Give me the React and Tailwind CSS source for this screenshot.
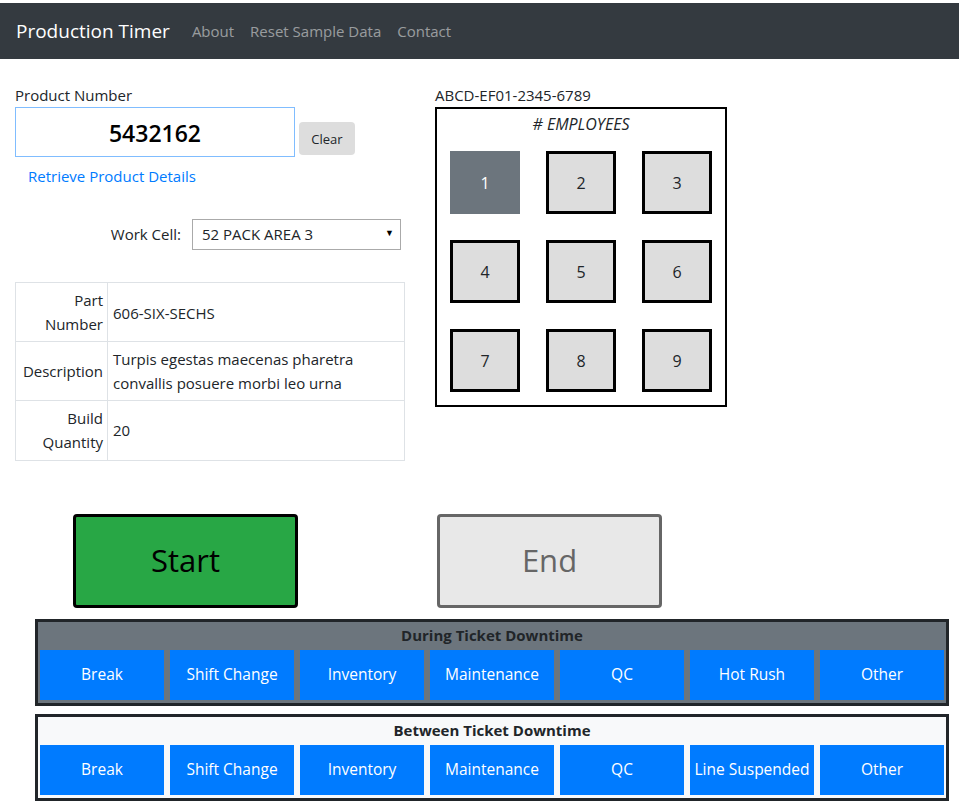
import { useState } from 'react'

const FONT = { fontFamily: '"Open Sans", "Noto Sans", sans-serif' }

const DURING = ['Break', 'Shift Change', 'Inventory', 'Maintenance', 'QC', 'Hot Rush', 'Other']
const BETWEEN = ['Break', 'Shift Change', 'Inventory', 'Maintenance', 'QC', 'Line Suspended', 'Other']

function DowntimePanel({ title, reasons, dark }) {
  return (
    <div
      className={`border-[3px] border-[#212529] px-[2px] pb-[3px] ${dark ? 'bg-[#6c757d]' : 'bg-[#f8f9fa]'}`}
    >
      <div className="flex h-[28px] items-center justify-center text-[15px] font-bold text-[#212529]">{title}</div>
      <div className="grid grid-cols-7 gap-[6px]">
        {reasons.map((reason) => (
          <button
            key={reason}
            type="button"
            className="h-[50px] bg-[#007bff] text-[15.5px] whitespace-nowrap text-white"
          >
            {reason}
          </button>
        ))}
      </div>
    </div>
  )
}

function EmployeePad() {
  const [selected, setSelected] = useState(1)

  return (
    <div className="w-[292px]">
      <div className="-mt-[2px] h-[23px] text-[15px] text-[#212529]">ABCD-EF01-2345-6789</div>
      <div className="h-[300px] border-2 border-black">
        <div className="pt-[3px] text-center text-[16px] italic text-[#212529]"># EMPLOYEES</div>
        <div className="mt-[15px] grid grid-cols-3 gap-x-[26px] gap-y-[26px] px-[13px]">
          {[1, 2, 3, 4, 5, 6, 7, 8, 9].map((n) => (
            <button
              key={n}
              type="button"
              onClick={() => setSelected(n)}
              className={`flex h-[63px] w-[70px] items-center justify-center text-[16px] ${
                selected === n ? 'bg-[#6c757d] text-white' : 'border-[3px] border-black bg-[#dddddd] text-[#212529]'
              }`}
            >
              {n}
            </button>
          ))}
        </div>
      </div>
    </div>
  )
}

export default function App() {
  const [product, setProduct] = useState('5432162')

  return (
    <div className="min-h-[808px] bg-white pt-[3px]" style={FONT}>
      <nav className="flex h-[56px] items-center bg-[#343a40] pl-4">
        <span className="mr-[22px] text-[19px] text-white">Production Timer</span>
        <div className="flex gap-[16px] text-[15px] text-white/50">
          <span>About</span>
          <span>Reset Sample Data</span>
          <span>Contact</span>
        </div>
      </nav>

      <div className="flex pt-[27px]">
        <div className="ml-[15px] w-[390px]">
          <div className="h-[21px] -mt-[2px] mb-[2px] text-[15px] text-[#212529]">Product Number</div>
          <div className="flex items-start gap-[4px]">
            <input
              value={product}
              onChange={(e) => setProduct(e.target.value)}
              className="h-[50px] w-[280px] border border-[#80bdff] pt-[2px] text-center text-[23px] font-semibold text-black outline-none"
            />
            <button
              type="button"
              className="mt-[15px] h-[33px] w-[56px] rounded-[4px] bg-[#dddddd] pt-[2px] text-[13px] text-[#212529]"
            >
              Clear
            </button>
          </div>
          <div className="mt-[8px] pl-[13px] text-[15px] text-[#007bff]">Retrieve Product Details</div>

          <div className="mt-[31px] flex items-center justify-end pr-[4px]">
            <span className="mr-[11px] text-[15px] text-[#212529]">Work Cell:</span>
            <div className="relative flex h-[31px] w-[209px] items-center border border-[#aaaaaa] pl-[9px] text-[15px] text-[#212529]">
              52 PACK AREA 3
              <span className="absolute right-[6px] top-[6px] text-[9px] text-black">▼</span>
            </div>
          </div>

          <table className="mt-[32px] w-[390px] border-collapse text-[15px] text-[#212529]">
            <tbody>
              <tr className="h-[59px]">
                <td className="w-[92px] border border-[#dee2e6] pr-[4px] text-right leading-[24px]">
                  Part
                  <br />
                  Number
                </td>
                <td className="border border-[#dee2e6] pl-[5px] align-top pt-[18px] leading-[24px]">606-SIX-SECHS</td>
              </tr>
              <tr className="h-[59px]">
                <td className="border border-[#dee2e6] pr-[4px] text-right leading-[24px]">Description</td>
                <td className="border border-[#dee2e6] pl-[5px] leading-[24px]">
                  Turpis egestas maecenas pharetra
                  <br />
                  convallis posuere morbi leo urna
                </td>
              </tr>
              <tr className="h-[60px]">
                <td className="border border-[#dee2e6] pr-[4px] text-right leading-[24px]">
                  Build
                  <br />
                  Quantity
                </td>
                <td className="border border-[#dee2e6] pl-[5px] leading-[24px]">20</td>
              </tr>
            </tbody>
          </table>
        </div>

        <div className="ml-[30px]">
          <EmployeePad />
        </div>
      </div>

      <div className="mt-[53px] flex">
        <button
          type="button"
          className="ml-[73px] h-[94px] w-[225px] rounded-[4px] border-[3px] border-black bg-[#28a745] text-[31px] text-black"
        >
          Start
        </button>
        <button
          type="button"
          className="ml-[139px] h-[94px] w-[225px] rounded-[4px] border-[3px] border-[#666666] bg-[#e8e8e8] text-[31px] text-[#666666]"
        >
          End
        </button>
      </div>

      <div className="ml-[35px] mt-[11px] flex w-[914px] flex-col gap-[8px]">
        <DowntimePanel title="During Ticket Downtime" reasons={DURING} dark />
        <DowntimePanel title="Between Ticket Downtime" reasons={BETWEEN} />
      </div>
    </div>
  )
}
